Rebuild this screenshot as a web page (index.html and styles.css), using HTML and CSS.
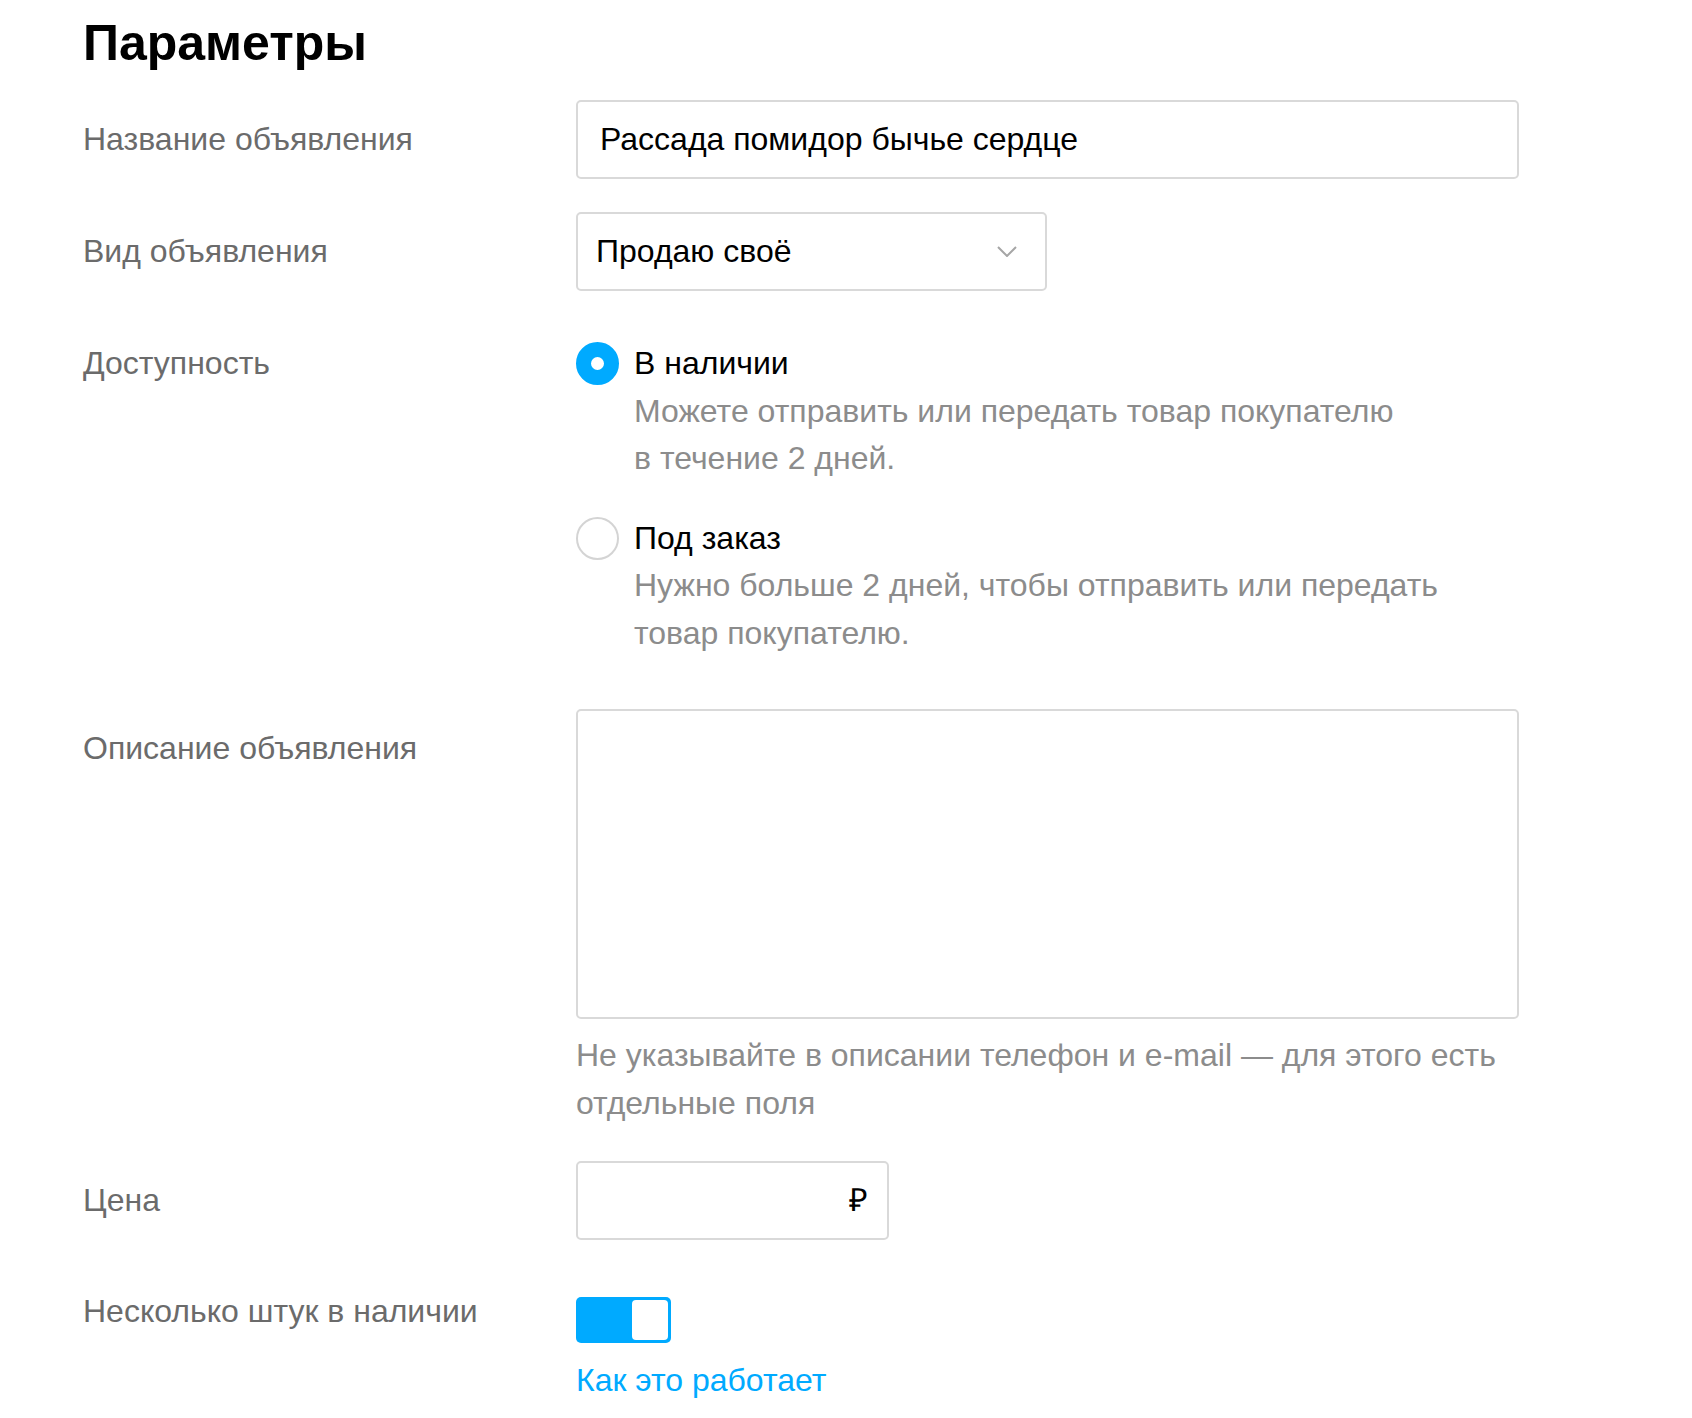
FILE: index.html
```html
<!DOCTYPE html>
<html lang="ru">
<head>
    <meta charset="UTF-8">
    <meta name="viewport" content="width=device-width, initial-scale=1.0">
    <title>Параметры</title>
    <link rel="stylesheet" href="styles.css">
</head>
<body>
    <form class="params">
        <h1 class="title">Параметры</h1>

        <div class="row row-first">
            <div class="label label-box">Название объявления</div>
            <input class="input input-wide" type="text" value="Рассада помидор бычье сердце">
        </div>

        <div class="row row-select">
            <div class="label label-box">Вид объявления</div>
            <div class="select">
                <span>Продаю своё</span>
                <svg class="chevron" width="20" height="11" viewBox="0 0 20 11">
                    <path d="M1 1 L10 10 L19 1" fill="none" stroke="#a6a6a6" stroke-width="2"/>
                </svg>
            </div>
        </div>

        <div class="row row-radios">
            <div class="label">Доступность</div>
            <div class="radios">
                <label class="radio">
                    <span class="radio-mark radio-checked"></span>
                    <span class="radio-body">
                        <span class="radio-title">В наличии</span>
                        <span class="radio-desc">Можете отправить или передать товар покупателю<br>в течение 2 дней.</span>
                    </span>
                </label>
                <label class="radio radio-next">
                    <span class="radio-mark"></span>
                    <span class="radio-body">
                        <span class="radio-title">Под заказ</span>
                        <span class="radio-desc">Нужно больше 2 дней, чтобы отправить или передать<br>товар покупателю.</span>
                    </span>
                </label>
            </div>
        </div>

        <div class="row row-desc">
            <div class="label label-box">Описание объявления</div>
            <div class="field">
                <textarea class="textarea"></textarea>
                <p class="hint">Не указывайте в описании телефон и e-mail — для этого есть отдельные поля</p>
            </div>
        </div>

        <div class="row row-price">
            <div class="label label-box">Цена</div>
            <div class="price">
                <input class="price-input" type="text">
                <span class="currency">₽</span>
            </div>
        </div>

        <div class="row row-switch">
            <div class="label">Несколько штук в наличии</div>
            <div class="field">
                <div class="switch"><span class="knob"></span></div>
                <a class="link" href="#">Как это работает</a>
            </div>
        </div>
    </form>
</body>
</html>
```

FILE: styles.css
```css
body { margin: 0; padding: 15px 0 0 83px; font-family: "Liberation Sans", Arial, sans-serif; font-size: 32px; line-height: 47.5px; color: #000; background: #fff; }
.title { margin: 0; font-size: 50px; line-height: 56px; font-weight: bold; }

.row { display: flex; align-items: flex-start; }
.row-first { margin-top: 29px; }
.row-select { margin-top: 33px; }
.row-radios { margin-top: 49px; }
.row-desc { margin-top: 52px; }
.row-price { margin-top: 34px; }
.row-switch { margin-top: 48px; }

.label { width: 493px; flex: none; color: #6b6b6b; }
.label-box { line-height: 78px; }

.input, .select, .textarea, .price { box-sizing: border-box; border: 2px solid #d9d9d9; border-radius: 5px; background: #fff; }
.input { width: 943px; height: 79px; padding: 0 22px; font: inherit; color: #000; outline: none; }

.select { width: 471px; height: 79px; padding: 0 28px 0 18px; display: flex; align-items: center; justify-content: space-between; }
.chevron { display: block; }

.radio { display: flex; gap: 15px; }
.radio-next { margin-top: 32px; }
.radio-mark { width: 43px; height: 43px; margin-top: 2px; box-sizing: border-box; border-radius: 50%; border: 2px solid #d4d4d4; flex: none; }
.radio-checked { border: 15px solid #00aaff; }
.radio-body { display: flex; flex-direction: column; }
.radio-desc { color: #8c8c8c; }

.textarea { display: block; width: 943px; height: 310px; resize: none; font: inherit; padding: 20px 22px; outline: none; }
.hint { margin: 13px 0 0; width: 943px; color: #8c8c8c; }

.price { width: 313px; height: 79px; display: flex; align-items: center; padding: 0 19px 0 22px; }
.price-input { flex: 1; min-width: 0; border: none; font: inherit; outline: none; padding: 0; }
.currency { color: #000; }

.switch { width: 95px; height: 46px; margin-top: 9px; box-sizing: border-box; padding: 3px; border-radius: 5px; background: #00aaff; display: flex; justify-content: flex-end; }
.knob { width: 36px; height: 40px; border-radius: 4px; background: #fff; }
.link { display: block; margin-top: 14px; color: #00aaff; text-decoration: none; }
```
